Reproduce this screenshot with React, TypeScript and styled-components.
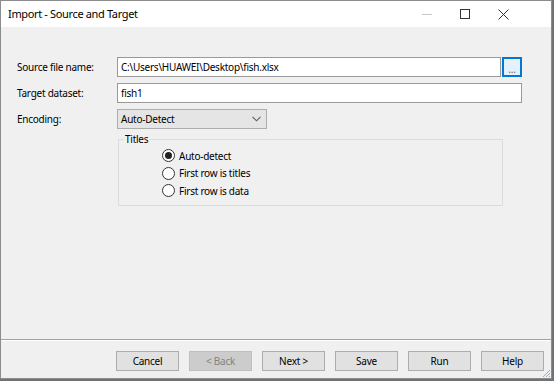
import React from "react";
import styled, { createGlobalStyle } from "styled-components";

const GlobalStyle = createGlobalStyle`
  html, body {
    margin: 0;
    padding: 0;
    background: #6f7479;
  }
  body {
    font-family: "Segoe UI", "Noto Sans", "Open Sans", sans-serif;
    font-size: 10px;
    letter-spacing: -0.25px;
    color: #000;
  }
`;

const Window = styled.div`
  width: 550px;
  height: 377px;
  border: 1px solid #8c8c8c;
  background: #f0f0f0;
  display: flex;
  flex-direction: column;
  position: relative;
`;

const TitleBar = styled.div`
  height: 26px;
  background: #fff;
  display: flex;
  align-items: center;
  padding-left: 7px;
`;

const Title = styled.div`
  flex: 1;
  font-size: 11px;
  letter-spacing: -0.35px;
  margin-top: -1px;
`;

const Controls = styled.div`
  display: flex;
  height: 100%;
  padding-right: 29px;
`;

const ControlBtn = styled.div`
  width: 38px;
  height: 100%;
  display: flex;
  align-items: center;
  justify-content: center;
`;

const Content = styled.div`
  flex: 1;
  padding: 30px 0 0 16px;
`;

const Form = styled.div`
  display: grid;
  grid-template-columns: 100px 405px;
  grid-auto-rows: auto;
  row-gap: 6px;
  align-items: center;
`;

const Label = styled.div``;

const InputRow = styled.div`
  display: flex;
  gap: 1px;
  align-items: center;
`;

const TextBox = styled.div<{ $w?: number }>`
  box-sizing: border-box;
  height: 20px;
  width: ${(p) => (p.$w ? `${p.$w}px` : "100%")};
  border: 1px solid #9a9a9a;
  background: #fff;
  padding: 0 3px;
  display: flex;
  align-items: center;
  white-space: nowrap;
  overflow: hidden;
`;

const BrowseBtn = styled.div`
  box-sizing: border-box;
  width: 20px;
  height: 20px;
  border: 2px solid #0078d7;
  background: #e5f1fb;
  display: flex;
  align-items: flex-end;
  justify-content: center;
  font-size: 10px;
  line-height: 12px;
  color: #666;
`;

const Select = styled.div`
  box-sizing: border-box;
  width: 150px;
  height: 20px;
  border: 1px solid #adadad;
  background: #e5e5e5;
  display: flex;
  align-items: center;
  justify-content: space-between;
  padding: 0 5px 0 3px;
`;

const GroupBox = styled.fieldset`
  grid-column: 2;
  margin: -3px 0 0 1px;
  width: 385px;
  box-sizing: border-box;
  height: 74px;
  border: 1px solid #dcdcdc;
  padding: 2px 0 0 43px;
  display: flex;
  flex-direction: column;
  gap: 2px;
`;

const Legend = styled.legend`
  padding: 0 1px;
  margin-left: -38px;
`;

const RadioRow = styled.div`
  display: flex;
  align-items: center;
  gap: 4px;
  height: 15.5px;
`;

const RadioCircle = styled.span<{ $checked?: boolean }>`
  box-sizing: border-box;
  width: 13px;
  height: 13px;
  border-radius: 50%;
  border: 1px solid #333;
  background: #fff;
  display: flex;
  align-items: center;
  justify-content: center;
  &::after {
    content: "";
    width: 7px;
    height: 7px;
    border-radius: 50%;
    background: #222;
    display: ${(p) => (p.$checked ? "block" : "none")};
  }
`;

const Footer = styled.div`
  box-sizing: border-box;
  border-top: 1px solid #a0a0a0;
  box-shadow: inset 0 1px 0 #fff;
  height: 39px;
  display: flex;
  justify-content: flex-end;
  padding: 11px 7px 0 0;
  gap: 10px;
`;

const Button = styled.div<{ $disabled?: boolean }>`
  box-sizing: border-box;
  width: 63px;
  height: 20px;
  border: 1px solid ${(p) => (p.$disabled ? "#bfbfbf" : "#adadad")};
  background: ${(p) => (p.$disabled ? "#cccccc" : "#e1e1e1")};
  color: ${(p) => (p.$disabled ? "#838383" : "#000")};
  display: flex;
  align-items: center;
  justify-content: center;
`;

const Grip = styled.svg`
  position: absolute;
  right: 0;
  bottom: 0;
`;

const radios = [
  { label: "Auto-detect", checked: true },
  { label: "First row is titles" },
  { label: "First row is data" },
];

const buttons = [
  { label: "Cancel" },
  { label: "< Back", disabled: true },
  { label: "Next >" },
  { label: "Save" },
  { label: "Run" },
  { label: "Help" },
];

export default function App() {
  return (
    <>
      <GlobalStyle />
      <Window>
        <TitleBar>
          <Title>Import - Source and Target</Title>
          <Controls>
            <ControlBtn>
              <svg width="10" height="10" viewBox="0 0 10 10">
                <line x1="0" y1="5.5" x2="10" y2="5.5" stroke="#c8c8c8" strokeWidth="1" />
              </svg>
            </ControlBtn>
            <ControlBtn>
              <svg width="10" height="10" viewBox="0 0 10 10">
                <rect x="0.5" y="0.5" width="9" height="9" fill="none" stroke="#333" strokeWidth="1" />
              </svg>
            </ControlBtn>
            <ControlBtn>
              <svg width="11" height="11" viewBox="0 0 11 11">
                <path d="M0.5 0.5 L10.5 10.5 M10.5 0.5 L0.5 10.5" stroke="#333" strokeWidth="1" />
              </svg>
            </ControlBtn>
          </Controls>
        </TitleBar>
        <Content>
          <Form>
            <Label>Source file name:</Label>
            <InputRow>
              <TextBox $w={384}>C:\Users\HUAWEI\Desktop\fish.xlsx</TextBox>
              <BrowseBtn>...</BrowseBtn>
            </InputRow>
            <Label>Target dataset:</Label>
            <TextBox>fish1</TextBox>
            <Label>Encoding:</Label>
            <Select>
              <span>Auto-Detect</span>
              <svg width="9" height="6" viewBox="0 0 9 6">
                <path d="M0.5 0.8 L4.5 4.8 L8.5 0.8" fill="none" stroke="#606060" strokeWidth="1.1" />
              </svg>
            </Select>
            <GroupBox>
              <Legend>Titles</Legend>
              {radios.map((r) => (
                <RadioRow key={r.label}>
                  <RadioCircle $checked={r.checked} />
                  {r.label}
                </RadioRow>
              ))}
            </GroupBox>
          </Form>
        </Content>
        <Footer>
          {buttons.map((b) => (
            <Button key={b.label} $disabled={b.disabled}>
              {b.label}
            </Button>
          ))}
        </Footer>
        <Grip width="10" height="10" viewBox="0 0 10 10">
          <path d="M9 2 L2 9 M9 5 L5 9 M9 8 L8 9" stroke="#aaa" strokeWidth="1" />
        </Grip>
      </Window>
    </>
  );
}
